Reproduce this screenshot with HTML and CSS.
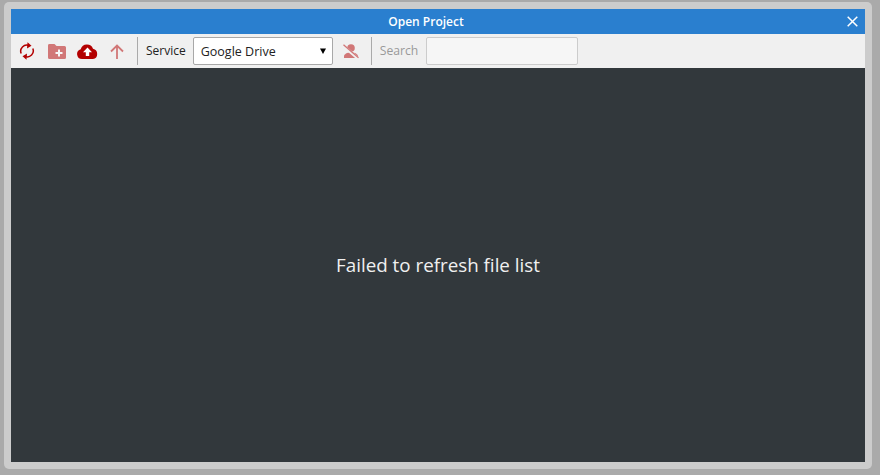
FILE: index.html
```html
<!DOCTYPE html>
<html lang="en">
<head>
<meta charset="utf-8">
<title>Open Project</title>
<link rel="stylesheet" href="styles.css">
</head>
<body>
<div class="frame">
  <header class="titlebar">
    <span class="title">Open Project</span>
    <svg class="close" width="11" height="11" viewBox="0 0 11 11"><path d="M.7.7l9.6 9.6M10.300.7L.7 10.300" stroke="#fff" stroke-width="1.500" fill="none"/></svg>
  </header>
  <div class="toolbar">
    <svg class="icon first" width="16" height="18" viewBox="0 0 16 18"><g fill="none" stroke="#b30000" stroke-width="1.500"><path d="M2.200 11.500A6 6 0 0 1 10 3.600"/><path d="M13.800 6.500A6 6 0 0 1 6 14.400"/></g><path d="M8.500 .2l4 3.600-4.500 2.600z" fill="#b30000"/><path d="M7.500 17.800l-4-3.600 4.500-2.600z" fill="#b30000"/></svg>
    <svg class="icon dim gap-folder" width="18" height="15" viewBox="0 0 18 15"><path d="M1.500 0h5l2 2h8A1.500 1.500 0 0 1 18 3.500v10a1.500 1.500 0 0 1-1.500 1.500h-15A1.500 1.500 0 0 1 0 13.500v-12A1.500 1.500 0 0 1 1.500 0z" fill="#b30000"/><path d="M10 5.500h2v2.500h2.500v2H12v2.500h-2V10H7.500V8H10z" fill="#fff"/></svg>
    <svg class="icon gap-cloud" width="21" height="15" viewBox="0 0 21 15"><path d="M5 15a5 5 0 0 1-1.300-9.800A6.500 6.500 0 0 1 16 4.800 5.200 5.200 0 0 1 16 15z" fill="#b30000"/><path d="M10.500 3.500l4.500 4.700h-2.800V12H8.800V8.200H6z" fill="#fff"/></svg>
    <svg class="icon dim gap-up" width="14" height="15" viewBox="0 0 14 15"><path d="M7 15V1.500M1 7.500l6-6 6 6" fill="none" stroke="#b30000" stroke-width="1.800"/></svg>
    <div class="divider div-one"></div>
    <span class="label">Service</span>
    <div class="select">
      <span>Google Drive</span>
      <svg width="6" height="6" viewBox="0 0 7 7"><path d="M0 .5h7L3.500 7z" fill="#000"/></svg>
    </div>
    <svg class="icon dim gap-user" width="16" height="15" viewBox="0 0 16 15"><circle cx="8" cy="4" r="3.800" fill="#b30000"/><path d="M1 14v-1.500C1 10 4 8.500 8 8.500s7 1.500 7 4V14z" fill="#b30000"/><path d="M1 2.500L15 14.500" stroke="#f0f0f0" stroke-width="3"/><path d="M.5 .8L15.500 13.800" stroke="#b30000" stroke-width="1.300"/></svg>
    <div class="divider div-two"></div>
    <span class="label muted">Search</span>
    <input class="search" type="text" aria-label="Search">
  </div>
  <main class="content">Failed to refresh file list</main>
</div>
</body>
</html>
```

FILE: styles.css
```css
* { box-sizing: border-box; }
html, body { height: 100%; }
body {
  margin: 0;
  padding: 2px 8px 6px 4px;
  background: #aaaaaa;
  font-family: "Open Sans", sans-serif;
}
.frame {
  height: 100%;
  padding: 7px;
  background: #cccccc;
  border-radius: 5px;
  display: flex;
  flex-direction: column;
}
.titlebar {
  height: 25px;
  flex: none;
  padding-right: 24px;
  background: #2a7fcf;
  color: #fff;
  display: flex;
  align-items: center;
  justify-content: center;
  position: relative;
  font-size: 12px;
  font-weight: 600;
}
.close { position: absolute; right: 7px; top: 7px; }
.toolbar {
  height: 34px;
  flex: none;
  background: #f0f0f0;
  display: flex;
  align-items: center;
  font-size: 12px;
  color: #222;
}
.icon { flex: none; }
.dim { opacity: .5; }
.first { margin-left: 8px; }
.gap-folder { margin-left: 13px; }
.gap-cloud { margin-left: 11px; }
.gap-up { margin-left: 12px; }
.divider { width: 1px; height: 28px; background: #aaa; flex: none; }
.div-one { margin-left: 13px; margin-right: 8px; }
.label { line-height: 18px; }
.select {
  width: 140px;
  height: 28px;
  margin-left: 7px;
  padding: 0 6px 0 7px;
  background: #fff;
  border: 1px solid #a8a8a8;
  border-radius: 2px;
  display: flex;
  align-items: center;
  justify-content: space-between;
  font-size: 12.500px;
  color: #222;
}
.gap-user { margin-left: 10px; }
.div-two { margin-left: 12px; margin-right: 8px; }
.muted { color: #999; font-size: 12.200px; }
.search {
  width: 152px;
  height: 28px;
  margin: 0 0 0 8px;
  padding: 0;
  background: #f6f6f6;
  border: 1px solid #ccc;
  border-radius: 2px;
  outline: none;
}
.content {
  flex: 1;
  background: #32383c;
  color: #f0f0f0;
  font-size: 18.800px;
  display: flex;
  align-items: center;
  justify-content: center;
}
```
